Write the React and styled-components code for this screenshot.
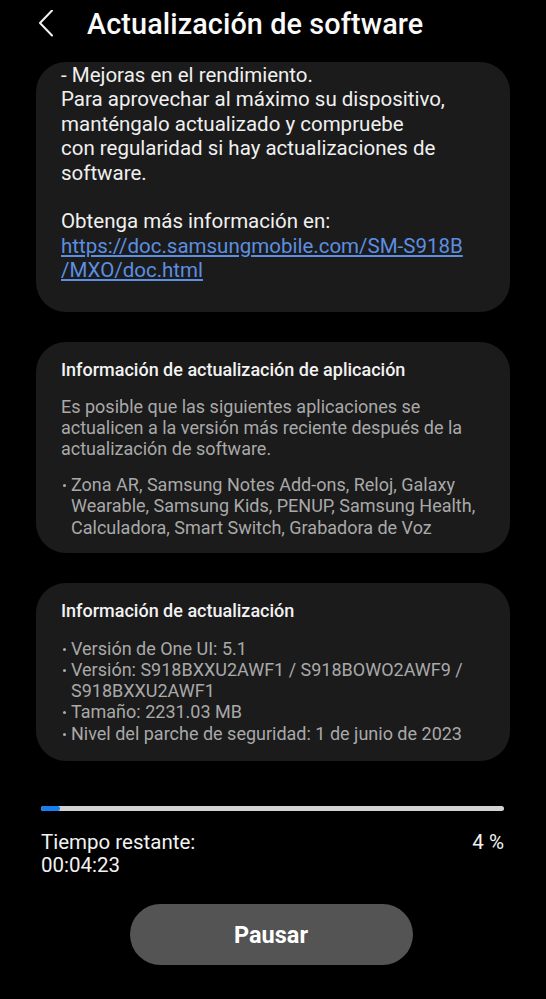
import React from "react";
import styled, { createGlobalStyle } from "styled-components";

const Global = createGlobalStyle`
  html, body { margin: 0; padding: 0; background: #000; }
  body { font-family: Roboto, "Noto Sans", "Liberation Sans", sans-serif; color: #f2f2f2; }
`;

const Screen = styled.div`
  width: 546px;
  height: 999px;
  background: #000;
  display: flex;
  flex-direction: column;
  overflow: hidden;
`;

const Header = styled.header`
  height: 48px;
  display: flex;
  align-items: center;
  padding-left: 37px;
  gap: 32px;
`;

const Title = styled.h1`
  margin: 0;
  font-size: 28.8px;
  font-weight: 500;
  color: #fafafa;
  letter-spacing: 0.1px;
`;

const BackBtn = styled.button`
  background: none;
  border: 0;
  padding: 0;
  display: flex;
  width: 18px;
  height: 28px;
`;

const Scroll = styled.main`
  margin-top: 14px;
  padding: 0 36px;
  display: flex;
  flex-direction: column;
  gap: 30px;
`;

const Card = styled.section`
  background: #1b1b1b;
  border-radius: 30px;
  padding: ${p => p.$pad || "17px 25px 15px"};
  overflow: hidden;
`;

const Body = styled.p`
  margin: 0;
  font-size: 20.5px;
  line-height: 24.4px;
  color: #f0f0f0;
  white-space: pre-line;
`;

const Link = styled.a`
  color: #5c8fe0;
  text-decoration: underline;
  text-underline-offset: 2px;
  font-size: 20.5px;
  line-height: 24.4px;
  display: block;
`;

const CardTitle = styled.h2`
  margin: 0 0 15.5px;
  font-size: 18px;
  line-height: 22px;
  font-weight: 500;
  color: #f2f2f2;
`;

const Gray = styled.p`
  margin: 0 0 15px;
  font-size: 18px;
  line-height: 21px;
  color: #a9a9a9;
`;

const List = styled.ul`
  margin: 0;
  padding: 0;
  list-style: none;
`;

const Item = styled.li`
  position: relative;
  padding-left: 10px;
  font-size: 18px;
  line-height: 21.3px;
  color: #a9a9a9;
  &::before {
    content: "";
    position: absolute;
    left: 2px;
    top: 10px;
    width: 3px;
    height: 3px;
    border-radius: 50%;
    background: #a9a9a9;
  }
`;

const Progress = styled.div`
  margin: 45px 42px 0 41px;
  height: 5px;
  border-radius: 3px;
  background: #d2d2d2;
  overflow: hidden;
`;

const Fill = styled.div`
  height: 100%;
  background: #1a7df0;
  border-radius: 3px;
`;

const Status = styled.div`
  margin: 20px 42px 0 41px;
  display: flex;
  justify-content: space-between;
  font-size: 20.5px;
  line-height: 23px;
  color: #f2f2f2;
`;

const ButtonRow = styled.div`
  display: flex;
  justify-content: center;
  margin-top: 27px;
`;

const Pause = styled.button`
  width: 283px;
  height: 61px;
  margin-left: -4px;
  border: 0;
  border-radius: 31px;
  background: #545454;
  color: #fff;
  font-family: inherit;
  font-size: 23.5px;
  font-weight: 700;
`;

const bullets = [
  "Versión de One UI: 5.1",
  "Versión: S918BXXU2AWF1 / S918BOWO2AWF9 / S918BXXU2AWF1",
  "Tamaño: 2231.03 MB",
  "Nivel del parche de seguridad: 1 de junio de 2023",
];

export default function App() {
  const percent = 4;
  return (
    <Screen>
      <Global />
      <Header>
        <BackBtn aria-label="Atrás">
          <svg width="18" height="28" viewBox="0 0 18 28">
            <path d="M15 0.5 L3 13 L15 25.5" fill="none" stroke="#f2f2f2" strokeWidth="2" strokeLinecap="round" strokeLinejoin="round" />
          </svg>
        </BackBtn>
        <Title>Actualización de software</Title>
      </Header>
      <Scroll>
        <Card $pad="1px 25px 29px">
          <Body>
            {" - Mejoras en el rendimiento.\nPara aprovechar al máximo su dispositivo,\nmanténgalo actualizado y compruebe\ncon regularidad si hay actualizaciones de\nsoftware.\n\nObtenga más información en:"}
          </Body>
          <Link href="#">https://doc.samsungmobile.com/SM-S918B<br />/MXO/doc.html</Link>
        </Card>
        <Card>
          <CardTitle>Información de actualización de aplicación</CardTitle>
          <Gray>Es posible que las siguientes aplicaciones se actualicen a la versión más reciente después de la actualización de software.</Gray>
          <List>
            <Item>Zona AR, Samsung Notes Add-ons, Reloj, Galaxy Wearable, Samsung Kids, PENUP, Samsung Health, Calculadora, Smart Switch, Grabadora de Voz</Item>
          </List>
        </Card>
        <Card $pad="17px 25px 17px">
          <CardTitle>Información de actualización</CardTitle>
          <List>
            {bullets.map(b => <Item key={b}>{b}</Item>)}
          </List>
        </Card>
      </Scroll>
      <Progress>
        <Fill style={{ width: `${percent}%` }} />
      </Progress>
      <Status>
        <span>Tiempo restante:<br />00:04:23</span>
        <span>{percent} %</span>
      </Status>
      <ButtonRow>
        <Pause>Pausar</Pause>
      </ButtonRow>
    </Screen>
  );
}
